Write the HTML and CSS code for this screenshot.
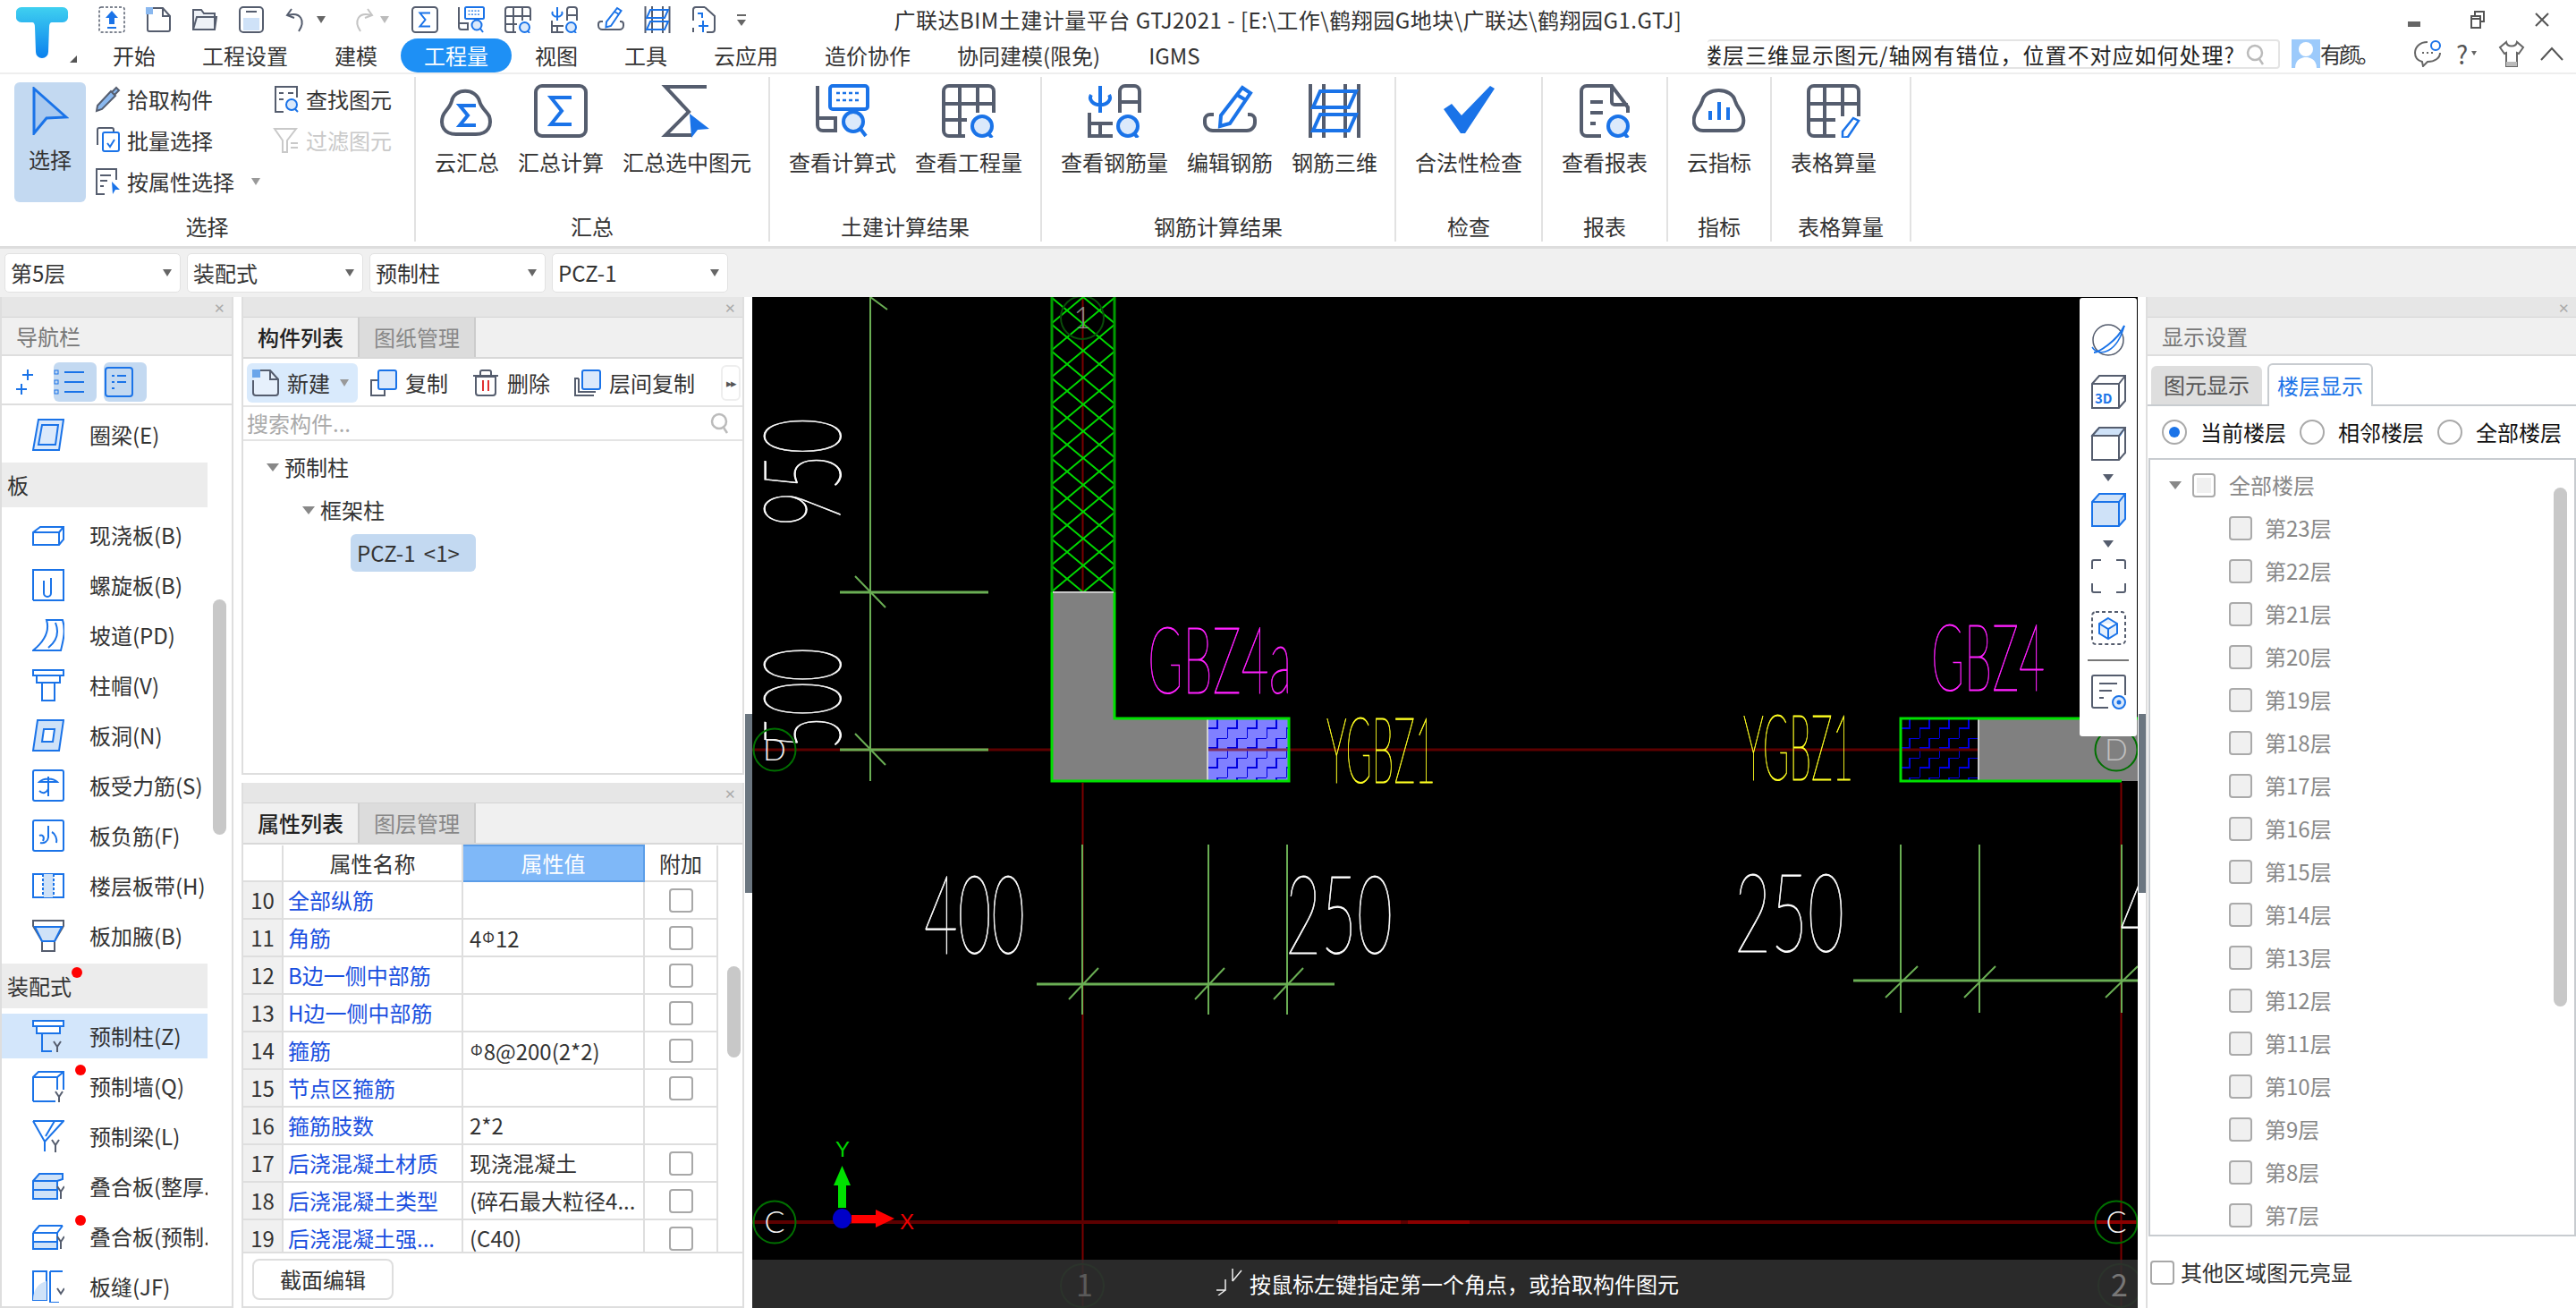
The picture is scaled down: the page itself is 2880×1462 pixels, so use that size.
FILE: index.html
```html
<!DOCTYPE html>
<html lang="zh-CN">
<head>
    <meta charset="UTF-8">
    <title>广联达BIM土建计量平台 GTJ2021</title>
    <link rel="stylesheet" href="styles.css">
</head>
<body>

<!-- shared icons -->
<svg class="defs" width="0" height="0">
    <symbol id="i-sumbox" viewBox="0 0 60 60">
        <rect x="2" y="2" width="56" height="56" rx="7" class="g"/>
        <path d="M42 15H19l12 15-12 15h23" class="b"/>
    </symbol>
    <symbol id="i-calc" viewBox="0 0 60 60">
        <path d="M2 2V46a6 6 0 0 0 6 6h14V38H2" class="g"/>
        <rect x="16" y="2" width="42" height="26" rx="3" class="b"/>
        <path d="M23 10h4M30 10h4M37 10h4M44 10h4M23 18h4M30 18h4M37 18h4M44 18h4" class="b thin"/>
        <circle cx="42" cy="42" r="11" class="bf"/>
        <path d="M50 50l6 8" class="b"/>
    </symbol>
    <symbol id="i-grid" viewBox="0 0 60 60">
        <path d="M26 58H8a6 6 0 0 1-6-6V8a6 6 0 0 1 6-6h44a6 6 0 0 1 6 6v24M2 22H58M20 2V58M40 2V32M2 40H28" class="g"/>
        <circle cx="45" cy="47" r="11" class="bf"/>
        <path d="M52 55l4 5" class="b"/>
    </symbol>
    <symbol id="i-rebar" viewBox="0 0 60 60">
        <path d="M36 32V8a6 6 0 0 1 6-6h10a6 6 0 0 1 6 6v24M36 20H58M2 32V58H28M2 44H28M14 44V58" class="g"/>
        <path d="M14 2V32M4 12a11 8 0 1 0 20 0" class="b"/>
        <circle cx="45" cy="47" r="11" class="bf"/>
        <path d="M52 55l4 5" class="b"/>
    </symbol>
    <symbol id="i-pen" viewBox="0 0 60 60">
        <path d="M12 34H8a6 6 0 0 0-6 6v3a9 9 0 0 0 9 9h38a9 9 0 0 0 9-9v-3a6 6 0 0 0-6-6h-2" class="g"/>
        <path d="M44 4l9 6-23 34-11 3 1-12zM38 12l10 6" class="b"/>
    </symbol>
    <symbol id="i-3d" viewBox="0 0 60 60">
        <path d="M3 0V60M18 0V60M42 0V60M57 0V60" class="g"/>
        <path d="M14 8H54L46 26H6zM14 34H54L46 52H6z" class="b"/>
    </symbol>
    <symbol id="i-cloud" viewBox="0 0 64 56">
        <path d="M20 54C6 54 2 44 5 34c2-6 8-9 10-17C18 2 42 2 46 17c2 8 8 11 11 17 3 10-1 20-15 20z" class="g"/>
        <path d="M42 22H24l9 11-9 11h18" class="b"/>
    </symbol>
    <symbol id="i-report" viewBox="0 0 60 60">
        <path d="M26 58H10a6 6 0 0 1-6-6V8a6 6 0 0 1 6-6h28l18 24v6M38 2V20a3 3 0 0 0 3 3h15M14 20H28M14 32H28M14 44H20" class="g"/>
        <circle cx="45" cy="47" r="11" class="bf"/>
        <path d="M52 55l4 5" class="b"/>
    </symbol>
    <symbol id="i-stat" viewBox="0 0 60 60">
        <path d="M17 52H12C2 52 0 42 3 34c2-6 6-8 8-15C15 3 44 3 48 19c2 7 6 9 8 15 3 8 1 18-9 18H17z" class="g"/>
        <path d="M20 40V30M30 40V20M40 40V26" class="b"/>
    </symbol>
    <symbol id="i-gridpen" viewBox="0 0 60 60">
        <path d="M32 58H8a6 6 0 0 1-6-6V8a6 6 0 0 1 6-6h44a6 6 0 0 1 6 6v28M2 22H58M20 2V58M40 2V36M2 40H32" class="g"/>
        <path d="M52 38l6 3-12 18-6 1 0-7z" class="b thin"/>
    </symbol>
    <symbol id="i-cube" viewBox="0 0 41 40">
        <path d="M2 11l8-9h29V30l-7 8H2zM2 11H32V38M32 11l7-9" class="g thin"/>
    </symbol>
</svg>

<header class="top">
    <div class="logo">
        <svg width="60" height="58" viewBox="0 0 60 58">
            <defs>
                <linearGradient id="logoFill" x1="0" y1="0" x2="0" y2="1">
                    <stop offset="0" stop-color="#3fd0f0"/>
                    <stop offset="1" stop-color="#0a80ee"/>
                </linearGradient>
            </defs>
            <path d="M6 1H52a6 6 0 0 1 6 7v3a6 6 0 0 1-6 7H40c-2 0-3 2-3 5l-1 28a7 7 0 0 1-14 0L21 23c0-3-1-5-3-5H6a6 6 0 0 1-6-7V8a6 6 0 0 1 6-7z" fill="url(#logoFill)"/>
        </svg>
        <span class="logo-mark"></span>
    </div>
    <div class="top-main">
        <div class="top-row">
            <div class="qa">
                <svg class="qa-i" viewBox="0 0 30 30"><rect x="1" y="1" width="28" height="28" rx="2" fill="none" stroke="#555d6e" stroke-width="1.5" stroke-dasharray="3 2"/><path d="M15 5l7 8h-4v7h-6v-7H8z" fill="#1a73e8"/><path d="M10 24h10" stroke="#1a73e8" stroke-width="2"/></svg>
                <svg class="qa-i" viewBox="0 0 30 30"><path d="M8 2H20l8 9V26a2 2 0 0 1-2 2H5a2 2 0 0 1-2-2V8M20 2v9h8" fill="none" stroke="#555d6e" stroke-width="2"/><path d="M1 1h8v8H1z" fill="#8ab8ef"/></svg>
                <svg class="qa-i" viewBox="0 0 30 30"><path d="M2 26V4h9l3 4h12v18zM2 26l4-14h22l-2 14" fill="#eef2f7" stroke="#555d6e" stroke-width="2"/></svg>
                <svg class="qa-i" viewBox="0 0 30 30"><rect x="2" y="1" width="26" height="28" rx="4" fill="#fff" stroke="#555d6e" stroke-width="2"/><rect x="6" y="13" width="18" height="14" fill="#cfe2f8"/><path d="M9 6h12" stroke="#555d6e" stroke-width="2"/></svg>
                <span class="qa-wide"><svg class="qa-i" viewBox="0 0 30 30"><path d="M8 3L3 10l8 3M4 10c14-4 20 6 12 18" fill="none" stroke="#555d6e" stroke-width="2"/></svg><i class="caret"></i></span>
                <span class="qa-wide off"><svg class="qa-i" viewBox="0 0 30 30"><path d="M22 3l5 7-8 3M26 10C12 6 6 16 14 28" fill="none" stroke="#c4c4c4" stroke-width="2"/></svg><i class="caret"></i></span>
                <svg class="qa-i"><use href="#i-sumbox"/></svg>
                <svg class="qa-i"><use href="#i-calc"/></svg>
                <svg class="qa-i"><use href="#i-grid"/></svg>
                <svg class="qa-i"><use href="#i-rebar"/></svg>
                <svg class="qa-i"><use href="#i-pen"/></svg>
                <svg class="qa-i"><use href="#i-3d"/></svg>
                <svg class="qa-i" viewBox="0 0 30 30"><path d="M16 1H6a3 3 0 0 0-3 3V16M16 1l11 10V26a3 3 0 0 1-3 3h-6M3 24v5" fill="none" stroke="#555d6e" stroke-width="2"/><path d="M9 22H20M14 16V29M8 8h5v5" fill="none" stroke="#1a73e8" stroke-width="2"/></svg>
                <span class="qa-more"></span>
            </div>
            <div class="title">广联达BIM土建计量平台 GTJ2021 - [E:\工作\鹤翔园G地块\广联达\鹤翔园G1.GTJ]</div>
            <div class="win">
                <span class="win-min"></span>
                <svg width="16" height="20" viewBox="0 0 16 20"><path d="M5 5V1h10v11h-4M1 6h10v13H1zM1 9h10" fill="none" stroke="#555" stroke-width="2"/></svg>
                <svg width="16" height="16" viewBox="0 0 16 16"><path d="M1 1l14 14M15 1L1 15" stroke="#555" stroke-width="2"/></svg>
            </div>
        </div>
        <div class="top-row menu-row">
            <nav class="menu">
                <a>开始</a><a>工程设置</a><a>建模</a><a class="on">工程量</a><a>视图</a><a>工具</a><a>云应用</a><a>造价协作</a><a>协同建模(限免)</a><a class="latin">IGMS</a>
            </nav>
            <div class="help-search">
                <span class="help-text">楼层三维显示图元/轴网有错位，位置不对应如何处理?</span>
                <svg width="22" height="24" viewBox="0 0 22 24"><circle cx="10" cy="10" r="8" fill="none" stroke="#bbb" stroke-width="2.5"/><path d="M15 17l4 6" stroke="#bbb" stroke-width="2.5"/></svg>
            </div>
            <div class="user">
                <svg width="32" height="32" viewBox="0 0 32 32"><rect width="32" height="32" fill="#9ccafb"/><circle cx="16" cy="11" r="8" fill="#fff"/><path d="M4 32c0-10 8-12 12-12s12 2 12 12z" fill="#fff"/></svg>
                <span>有颜。</span>
            </div>
            <div class="top-tools">
                <svg width="30" height="30" viewBox="0 0 30 30"><path d="M15 2C6 2 1 8 1 14c0 6 4 9 8 10l1 5 5-5c8 0 14-4 14-10" fill="none" stroke="#666" stroke-width="2"/><circle cx="24" cy="6" r="5" fill="#fff" stroke="#1a73e8" stroke-width="2"/><path d="M9 14h2M14 14h2M19 14h2" stroke="#666" stroke-width="2"/></svg>
                <span class="help-q">?<i class="caret"></i></span>
                <svg width="30" height="30" viewBox="0 0 30 30"><path d="M9 2l-7 6 5 7 2-1v15h12V14l2 1 5-7-7-6c-1 6-11 6-12 0z" fill="none" stroke="#666" stroke-width="2"/><path d="M9 24h12v5H9z" fill="#bbb"/></svg>
                <svg width="26" height="16" viewBox="0 0 26 16"><path d="M1 15L13 2l12 13" fill="none" stroke="#555" stroke-width="2"/></svg>
            </div>
        </div>
    </div>
</header>

<section class="ribbon">
    <div class="rb-group">
        <div class="rb-items select-items">
            <div class="select-big">
                <svg width="42" height="54" viewBox="0 0 42 54"><path d="M3 2L39 34 17 35 3 52z" fill="#a9c9ef" stroke="#1a73e8" stroke-width="3"/></svg>
                <span>选择</span>
            </div>
            <div class="small-col">
                <div class="small"><svg class="s-i" viewBox="0 0 30 30"><path d="M25 2l3 3-5 5-3-3zM19 6l5 5-15 15-6 2 1-6z" fill="#8ab8ef" stroke="#555d6e" stroke-width="2"/></svg>拾取构件</div>
                <div class="small"><svg class="s-i" viewBox="0 0 30 30"><path d="M4 20V3a2 2 0 0 1 2-2h14a2 2 0 0 1 2 2v2" fill="none" stroke="#555d6e" stroke-width="2"/><rect x="10" y="6" width="18" height="21" rx="2" fill="#fff" stroke="#1a73e8" stroke-width="2"/><path d="M15 18l3 4 5-8" fill="none" stroke="#1a73e8" stroke-width="2"/></svg>批量选择</div>
                <div class="small"><svg class="s-i" viewBox="0 0 30 30"><path d="M12 29H3V1h22v12M7 8h12M7 14h8M7 20h4" fill="none" stroke="#555d6e" stroke-width="2"/><path d="M20 15l9 9-5 0-3 5z" fill="#1a73e8"/></svg>按属性选择<i class="caret sm"></i></div>
            </div>
            <div class="small-col">
                <div class="small"><svg class="s-i" viewBox="0 0 30 30"><path d="M12 29H3V1h24v12M7 8h5M7 15h5M17 8h6" fill="none" stroke="#555d6e" stroke-width="2"/><circle cx="21" cy="21" r="6" fill="#dbe9fb" stroke="#1a73e8" stroke-width="2"/><path d="M25 26l3 3" stroke="#1a73e8" stroke-width="2"/></svg>查找图元</div>
                <div class="small off"><svg class="s-i" viewBox="0 0 30 30"><path d="M2 2H26L16 15V28H11V15z" fill="none" stroke="#c9c9c9" stroke-width="2"/><path d="M20 18h8M20 23h8" stroke="#c9c9c9" stroke-width="2"/></svg>过滤图元</div>
            </div>
        </div>
        <div class="rb-label">选择</div>
    </div>
    <div class="rb-group">
        <div class="rb-items">
            <div class="big"><svg class="b-i wide"><use href="#i-cloud"/></svg><span>云汇总</span></div>
            <div class="big"><svg class="b-i"><use href="#i-sumbox"/></svg><span>汇总计算</span></div>
            <div class="big">
                <svg class="b-i" viewBox="0 0 60 60"><path d="M52 3H6L32 31 6 57H36" class="g"/><path d="M33 33L55 50 42 51 35 60z" fill="#1a73e8"/></svg>
                <span>汇总选中图元</span>
            </div>
        </div>
        <div class="rb-label">汇总</div>
    </div>
    <div class="rb-group">
        <div class="rb-items">
            <div class="big"><svg class="b-i"><use href="#i-calc"/></svg><span>查看计算式</span></div>
            <div class="big"><svg class="b-i"><use href="#i-grid"/></svg><span>查看工程量</span></div>
        </div>
        <div class="rb-label">土建计算结果</div>
    </div>
    <div class="rb-group">
        <div class="rb-items">
            <div class="big"><svg class="b-i"><use href="#i-rebar"/></svg><span>查看钢筋量</span></div>
            <div class="big"><svg class="b-i"><use href="#i-pen"/></svg><span>编辑钢筋</span></div>
            <div class="big"><svg class="b-i"><use href="#i-3d"/></svg><span>钢筋三维</span></div>
        </div>
        <div class="rb-label">钢筋计算结果</div>
    </div>
    <div class="rb-group">
        <div class="rb-items">
            <div class="big">
                <svg class="b-i" viewBox="0 0 60 60"><path d="M2 28l9-6 11 13L54 2l5 3-33 50h-5z" fill="#1a73e8"/></svg>
                <span>合法性检查</span>
            </div>
        </div>
        <div class="rb-label">检查</div>
    </div>
    <div class="rb-group">
        <div class="rb-items">
            <div class="big"><svg class="b-i"><use href="#i-report"/></svg><span>查看报表</span></div>
        </div>
        <div class="rb-label">报表</div>
    </div>
    <div class="rb-group">
        <div class="rb-items">
            <div class="big"><svg class="b-i"><use href="#i-stat"/></svg><span>云指标</span></div>
        </div>
        <div class="rb-label">指标</div>
    </div>
    <div class="rb-group">
        <div class="rb-items">
            <div class="big"><svg class="b-i"><use href="#i-gridpen"/></svg><span>表格算量</span></div>
        </div>
        <div class="rb-label">表格算量</div>
    </div>
</section>

<section class="combos">
    <div class="combo">第5层<i class="caret"></i></div>
    <div class="combo">装配式<i class="caret"></i></div>
    <div class="combo">预制柱<i class="caret"></i></div>
    <div class="combo">PCZ-1<i class="caret"></i></div>
</section>

<main class="work">
    <!-- left nav -->
    <aside class="pane nav">
        <div class="pane-head">✕</div>
        <div class="pane-title">导航栏</div>
        <div class="nav-tools">
            <svg width="20" height="32" viewBox="0 0 20 32"><path d="M13 2v12M7 8h12M6 18v12M0 24h12" stroke="#1a73e8" stroke-width="2"/></svg>
            <span class="nav-btn"><svg width="34" height="30" viewBox="0 0 34 30"><path d="M12 4H34M12 15H34M12 26H34" stroke="#1a73e8" stroke-width="2"/><rect x="1" y="2" width="4" height="4" fill="none" stroke="#1a73e8"/><rect x="1" y="13" width="4" height="4" fill="none" stroke="#1a73e8"/><rect x="1" y="24" width="4" height="4" fill="none" stroke="#1a73e8"/></svg></span>
            <span class="nav-btn"><svg width="32" height="34" viewBox="0 0 32 34"><rect x="1" y="1" width="30" height="32" rx="3" fill="none" stroke="#1a73e8" stroke-width="2"/><path d="M8 10h3M14 10h10M8 17h3M14 17h10M8 24h3" stroke="#1a73e8" stroke-width="2"/></svg></span>
        </div>
        <div class="nav-list">
            <div class="nav-item"><svg class="n-i" viewBox="0 0 36 36"><path d="M7 1H35L30 35H1zM11 7H29L26 29H7z" fill="#dbe9fb" stroke="#1a73e8" stroke-width="2"/></svg>圈梁(E)</div>
            <div class="nav-group">板</div>
            <div class="nav-item"><svg class="n-i" viewBox="0 0 36 36"><path d="M1 15L9 9H35V23L30 29H1zM1 15H30V29M30 15l5-6" fill="#fff" stroke="#1a73e8" stroke-width="2"/></svg>现浇板(B)</div>
            <div class="nav-item"><svg class="n-i" viewBox="0 0 36 36"><path d="M1 35V1H35V35H1M13 13v14a4 4 0 0 0 8 0V10" fill="none" stroke="#1a73e8" stroke-width="2"/></svg>螺旋板(B)</div>
            <div class="nav-item"><svg class="n-i" viewBox="0 0 36 36"><path d="M16 1H34C38 14 34 26 32 35H1C12 26 20 14 16 1zM26 4c4 10 2 20-8 28" fill="#fff" stroke="#1a73e8" stroke-width="2"/></svg>坡道(PD)</div>
            <div class="nav-item"><svg class="n-i" viewBox="0 0 36 36"><path d="M1 1H35V7H1zM5 7H31V15H5zM11 15H25V35H11z" fill="#fff" stroke="#1a73e8" stroke-width="2"/></svg>柱帽(V)</div>
            <div class="nav-item"><svg class="n-i" viewBox="0 0 36 36"><path d="M6 1H35L30 35H1z" fill="#cfe2f8" stroke="#1a73e8" stroke-width="2"/><path d="M13 11H25L23 25H11z" fill="#fff" stroke="#1a73e8" stroke-width="2"/></svg>板洞(N)</div>
            <div class="nav-item"><svg class="n-i" viewBox="0 0 36 36"><rect x="1" y="1" width="34" height="34" rx="2" fill="none" stroke="#1a73e8" stroke-width="2"/><path d="M8 14a12 8 0 0 1 20 0H8zM18 8v22M8 24c4 4 8 2 10-2" fill="none" stroke="#1a73e8" stroke-width="2"/></svg>板受力筋(S)</div>
            <div class="nav-item"><svg class="n-i" viewBox="0 0 36 36"><rect x="1" y="1" width="34" height="34" rx="2" fill="none" stroke="#1a73e8" stroke-width="2"/><path d="M18 7V20a7 7 0 0 1-9 6M8 18c4-2 6 2 4 6M22 14c4 2 6 8 5 12" fill="none" stroke="#1a73e8" stroke-width="2"/></svg>板负筋(F)</div>
            <div class="nav-item"><svg class="n-i" viewBox="0 0 36 36"><rect x="1" y="5" width="34" height="26" fill="none" stroke="#1a73e8" stroke-width="2"/><rect x="12" y="5" width="12" height="26" fill="#cfe2f8"/><path d="M12 5v26M24 5v26" stroke="#1a73e8" stroke-width="2" stroke-dasharray="3 2"/></svg>楼层板带(H)</div>
            <div class="nav-item"><svg class="n-i" viewBox="0 0 36 36"><path d="M1 1H35V7L25 24V35H11V24L1 7z" fill="#fff" stroke="#555d6e" stroke-width="2"/><path d="M3 8H33L25 24H11z" fill="#cfe2f8" stroke="#1a73e8" stroke-width="2"/></svg>板加腋(B)</div>
            <div class="nav-group">装配式<i class="dot"></i></div>
            <div class="nav-item active"><svg class="n-i" viewBox="0 0 36 36"><path d="M1 1H35V7H1zM5 7H31V15H5z" fill="#fff" stroke="#1a73e8" stroke-width="2"/><path d="M11 15V35H22" fill="none" stroke="#1a73e8" stroke-width="2"/><path d="M24 24l4 6 4-6M28 30v6" fill="none" stroke="#555d6e" stroke-width="2"/></svg>预制柱(Z)</div>
            <div class="nav-item"><svg class="n-i" viewBox="0 0 36 36"><path d="M1 35V8L7 2H35V22M1 8H28V22M28 8l7-6M1 35H26" fill="none" stroke="#1a73e8" stroke-width="2"/><path d="M26 24l4 6 4-6M30 30v6" fill="none" stroke="#555d6e" stroke-width="2"/></svg>预制墙(Q)<i class="dot"></i></div>
            <div class="nav-item"><svg class="n-i" viewBox="0 0 36 36"><path d="M1 1H35L14 24V35M1 1L14 24M25 1L15 18" fill="none" stroke="#1a73e8" stroke-width="2"/><path d="M22 22l4 6 4-6M26 28v8" fill="none" stroke="#555d6e" stroke-width="2"/></svg>预制梁(L)</div>
            <div class="nav-item"><svg class="n-i" viewBox="0 0 36 36"><path d="M1 12L8 4H34V10L28 12H1zM1 12V32H28V12" fill="#cfe2f8" stroke="#1a73e8" stroke-width="2"/><path d="M1 22H28" stroke="#1a73e8" stroke-width="2"/><path d="M28 18l4 6 4-6M32 24v8" fill="none" stroke="#555d6e" stroke-width="2"/></svg>叠合板(整厚...</div>
            <div class="nav-item"><svg class="n-i" viewBox="0 0 36 36"><path d="M1 14L8 6H34M1 14H28M1 14V32H28V14M28 14l6-8" fill="none" stroke="#1a73e8" stroke-width="2"/><path d="M1 24H28V32H1z" fill="#cfe2f8" stroke="#1a73e8" stroke-width="2"/><path d="M28 18l4 6 4-6M32 24v8" fill="none" stroke="#555d6e" stroke-width="2"/></svg>叠合板(预制...<i class="dot"></i></div>
            <div class="nav-item"><svg class="n-i" viewBox="0 0 36 36"><path d="M1 1H16V33H1zM20 1H34M20 1V36H30" fill="none" stroke="#1a73e8" stroke-width="2"/><path d="M1 33C1 20 8 14 16 12V33z" fill="#cfe2f8"/><path d="M28 20l4 6 4-6" fill="none" stroke="#555d6e" stroke-width="2"/></svg>板缝(JF)</div>
            <span class="scroll nav-scroll"></span>
        </div>
    </aside>

    <!-- member list and properties -->
    <div class="mid">
        <div class="pane mid-top">
            <div class="pane-head">✕</div>
            <div class="tabs">
                <span class="tab on">构件列表</span><span class="tab">图纸管理</span>
            </div>
            <div class="list-tools">
                <span class="tool new">
                    <svg class="t-i" viewBox="0 0 30 30"><path d="M8 1H20L29 11V26a3 3 0 0 1-3 3H4a3 3 0 0 1-3-3V12" fill="#e6f0fc" stroke="#555d6e" stroke-width="2"/><path d="M20 1V11H29" fill="none" stroke="#555d6e" stroke-width="2"/><path d="M0 0h9v9H0z" fill="#6aa5ea"/></svg>新建<i class="caret sm"></i>
                </span>
                <span class="tool"><svg class="t-i" viewBox="0 0 30 30"><path d="M8 12H1V29H16V22" fill="none" stroke="#555d6e" stroke-width="2"/><rect x="9" y="1" width="20" height="21" rx="2" fill="#dbe9fb" stroke="#1a73e8" stroke-width="2"/></svg>复制</span>
                <span class="tool"><svg class="t-i" viewBox="0 0 30 30"><path d="M4 8H26V26a3 3 0 0 1-3 3H7a3 3 0 0 1-3-3zM1 7H29M9 7V3a2 2 0 0 1 2-2h8a2 2 0 0 1 2 2V7" fill="none" stroke="#555d6e" stroke-width="2"/><path d="M12 12V24M18 12V24" stroke="#e03030" stroke-width="2"/></svg>删除</span>
                <span class="tool"><svg class="t-i" viewBox="0 0 30 30"><path d="M5 10H1V29H22M5 10V25H24" fill="none" stroke="#555d6e" stroke-width="2"/><rect x="9" y="1" width="20" height="21" rx="2" fill="#dbe9fb" stroke="#1a73e8" stroke-width="2"/></svg>层间复制</span>
                <span class="tool-more">▸▸</span>
            </div>
            <div class="list-search">
                <span>搜索构件...</span>
                <svg width="22" height="26" viewBox="0 0 22 26"><circle cx="10" cy="11" r="8" fill="none" stroke="#bbb" stroke-width="2.5"/><path d="M15 18l4 6" stroke="#bbb" stroke-width="2.5"/></svg>
            </div>
            <div class="tree">
                <div class="tree-row lv1"><i class="caret tri"></i>预制柱</div>
                <div class="tree-row lv2"><i class="caret tri"></i>框架柱</div>
                <div class="tree-row lv3"><span class="picked">PCZ-1 &lt;1&gt;</span></div>
            </div>
        </div>
        <div class="pane mid-bottom">
            <div class="pane-head">✕</div>
            <div class="tabs">
                <span class="tab on">属性列表</span><span class="tab">图层管理</span>
            </div>
            <div class="props">
                <table class="prop-table">
                    <colgroup><col class="c-no"><col class="c-name"><col class="c-val"><col class="c-add"></colgroup>
                    <thead>
                        <tr><th></th><th>属性名称</th><th class="hi">属性值</th><th>附加</th></tr>
                    </thead>
                    <tbody>
                        <tr><td class="no">10</td><td class="name">全部纵筋</td><td class="val"></td><td class="add"><i class="box"></i></td></tr>
                        <tr><td class="no">11</td><td class="name">角筋</td><td class="val">4<span class="bar">Φ</span>12</td><td class="add"><i class="box"></i></td></tr>
                        <tr><td class="no">12</td><td class="name">B边一侧中部筋</td><td class="val"></td><td class="add"><i class="box"></i></td></tr>
                        <tr><td class="no">13</td><td class="name">H边一侧中部筋</td><td class="val"></td><td class="add"><i class="box"></i></td></tr>
                        <tr><td class="no">14</td><td class="name">箍筋</td><td class="val"><span class="bar">Φ</span>8@200(2*2)</td><td class="add"><i class="box"></i></td></tr>
                        <tr><td class="no">15</td><td class="name">节点区箍筋</td><td class="val"></td><td class="add"><i class="box"></i></td></tr>
                        <tr><td class="no">16</td><td class="name">箍筋肢数</td><td class="val">2*2</td><td class="add"></td></tr>
                        <tr><td class="no">17</td><td class="name">后浇混凝土材质</td><td class="val">现浇混凝土</td><td class="add"><i class="box"></i></td></tr>
                        <tr><td class="no">18</td><td class="name">后浇混凝土类型</td><td class="val">(碎石最大粒径4...</td><td class="add"><i class="box"></i></td></tr>
                        <tr><td class="no">19</td><td class="name">后浇混凝土强...</td><td class="val">(C40)</td><td class="add"><i class="box"></i></td></tr>
                    </tbody>
                </table>
                <span class="scroll prop-scroll"></span>
            </div>
            <div class="prop-foot"><button class="section-btn" type="button">截面编辑</button></div>
        </div>
    </div>

    <div class="handle"><span></span></div>

    <!-- drawing -->
    <div class="canvas">
        <svg class="cad" viewBox="841 332 1549 1130" width="1549" height="1130">
            <defs>
                <pattern id="hatchGreen" x="1175" y="332" width="36" height="30" patternUnits="userSpaceOnUse">
                    <path d="M0 0L36 30M36 0L0 30" stroke="#00d800" stroke-width="2"/>
                </pattern>
                <pattern id="hatchBlue" x="1350" y="803" width="22" height="22" patternUnits="userSpaceOnUse">
                    <path d="M0 22V11H11V0H22" fill="none" stroke="#0000e0" stroke-width="2"/>
                </pattern>
                <pattern id="hatchBlue2" x="2124" y="803" width="22" height="22" patternUnits="userSpaceOnUse">
                    <path d="M0 22V11H11V0H22" fill="none" stroke="#0000e0" stroke-width="2"/>
                </pattern>
            </defs>

            <!-- axis lines -->
            <path d="M1210.5 332V662M1210.5 875V1462M2371.5 875V1462" stroke="#7a0000" stroke-width="2"/>
            <path d="M841 838H1175M1350 838H2124" stroke="#5c0000" stroke-width="3"/>
            <path d="M841 1366H2390" stroke="#5c0000" stroke-width="4"/>
            <path d="M1496 1366H1566M1574 1366H1643M2345 1366H2390" stroke="#8b0000" stroke-width="4"/>

            <!-- walls -->
            <rect x="1175" y="332" width="72" height="330" fill="url(#hatchGreen)"/>
            <path d="M1176 332V662M1246 332V662" stroke="#009a00" stroke-width="3"/>
            <path d="M1175 662H1246V803H1350V873H1175z" fill="#808080"/>
            <rect x="1350" y="803" width="91" height="70" fill="#8080ff"/>
            <rect x="1350" y="803" width="91" height="70" fill="url(#hatchBlue)"/>
            <path d="M1350 838H1441" stroke="#803060" stroke-width="3"/>
            <path d="M1350 803V873" stroke="#d0d0d0" stroke-width="2"/>
            <path d="M1176 662V873H1441V803H1246V662" fill="none" stroke="#00e000" stroke-width="3"/>
            <path d="M1177 662H1245" stroke="#c8c8c8" stroke-width="2"/>

            <rect x="2124" y="803" width="88" height="70" fill="url(#hatchBlue2)"/>
            <path d="M2124 838H2212" stroke="#5c0000" stroke-width="3"/>
            <rect x="2212" y="803" width="178" height="70" fill="#808080"/>
            <path d="M2212 803V873" stroke="#c8c8c8" stroke-width="2"/>
            <path d="M2390 803H2125V873H2372" fill="none" stroke="#00e000" stroke-width="3"/>

            <!-- dimension lines -->
            <g class="dim">
                <path d="M973 332V873M973 332L992 346M956 644L990 679M956 820L990 855"/>
                <path d="M1210 944V1134M1351 944V1134M1439 944V1134M2125 944V1132M2213 944V1132M2372 944V1132"/>
                <path d="M1228 1082L1195 1117M1369 1082L1336 1117M1457 1082L1424 1117M2144 1080L2108 1115M2231 1080L2196 1115M2390 1080L2354 1115"/>
                <path class="wide" d="M939 662H1105M939 838H1105M1159 1100H1492M2072 1096H2390"/>
            </g>

            <!-- labels -->
            <text class="cad-text white" transform="translate(940 589) rotate(-90)" font-size="120" textLength="122" lengthAdjust="spacingAndGlyphs">950</text>
            <text class="cad-text white" transform="translate(940 838) rotate(-90)" font-size="120" textLength="114" lengthAdjust="spacingAndGlyphs">500</text>
            <text class="cad-text white" x="1033" y="1066" font-size="122" textLength="113" lengthAdjust="spacingAndGlyphs">400</text>
            <text class="cad-text white" x="1437" y="1066" font-size="122" textLength="120" lengthAdjust="spacingAndGlyphs">250</text>
            <text class="cad-text white" x="1939" y="1064" font-size="122" textLength="123" lengthAdjust="spacingAndGlyphs">250</text>
            <text class="cad-text white" x="2370" y="1064" font-size="122" textLength="113" lengthAdjust="spacingAndGlyphs">400</text>
            <text class="cad-text pink" x="1283" y="775" font-size="104" textLength="161" lengthAdjust="spacingAndGlyphs">GBZ4a</text>
            <text class="cad-text pink" x="2159" y="772" font-size="104" textLength="127" lengthAdjust="spacingAndGlyphs">GBZ4</text>
            <text class="cad-text yellow" x="1483" y="875" font-size="103" textLength="122" lengthAdjust="spacingAndGlyphs">YGBZ1</text>
            <text class="cad-text yellow" x="1949" y="872" font-size="103" textLength="123" lengthAdjust="spacingAndGlyphs">YGBZ1</text>

            <!-- axis bubbles -->
            <g class="bubble">
                <circle cx="866" cy="838" r="23.5"/>
                <circle cx="2366" cy="838" r="23.5"/>
                <circle cx="866" cy="1366" r="23.5"/>
                <circle cx="2366" cy="1366" r="23.5"/>
                <circle cx="1210" cy="355" r="24" class="dim-ring"/>
                <circle cx="1210" cy="1437" r="24" class="dim-ring"/>
                <circle cx="2370" cy="1437" r="24" class="dim-ring"/>
            </g>
            <text class="axis-mark" x="866" y="850">D</text>
            <text class="axis-mark grey" x="2366" y="850">D</text>
            <text class="axis-mark" x="866" y="1378">C</text>
            <text class="axis-mark" x="2366" y="1378">C</text>
            <text class="axis-mark dimmed" x="1210" y="367">1</text>

            <!-- origin -->
            <path d="M941.500 1350V1325" stroke="#00e000" stroke-width="9"/>
            <path d="M941.500 1303L951 1325H932z" fill="#00e000"/>
            <path d="M952 1362.500H979" stroke="#ff0000" stroke-width="9"/>
            <path d="M1000 1362L979 1352V1372z" fill="#ff0000"/>
            <ellipse cx="941.500" cy="1362" rx="10.500" ry="11" fill="#0000c8"/>
            <text class="xy green" x="942" y="1293">Y</text>
            <text class="xy red" x="1014" y="1374">X</text>
        </svg>

        <div class="view-tools">
            <svg class="v-i" viewBox="0 0 41 40"><circle cx="20" cy="20" r="17" fill="none" stroke="#555d6e" stroke-width="1.500"/><path d="M4 34C8 34 30 22 38 4" fill="none" stroke="#1a73e8" stroke-width="2"/><path d="M2 28C10 40 30 34 38 4" fill="none" stroke="#1a73e8" stroke-width="1.500"/></svg>
            <svg class="v-i" viewBox="0 0 41 40"><use href="#i-cube"/><text class="v-3d" x="5" y="33">3D</text></svg>
            <svg class="v-i" viewBox="0 0 41 40"><path d="M2 11H33l6-9H10z" fill="#cfe2f8" stroke="#1a73e8" stroke-width="1.500"/><use href="#i-cube"/></svg>
            <i class="caret v-caret"></i>
            <svg class="v-i" viewBox="0 0 41 40"><path d="M2 11l8-9h29V30l-7 8H2z" fill="#cfe2f8" stroke="#1a73e8" stroke-width="2"/><path d="M2 11H32V38M32 11l7-9" fill="none" stroke="#1a73e8" stroke-width="2"/></svg>
            <i class="caret v-caret"></i>
            <svg class="v-i" viewBox="0 0 41 40"><path d="M2 12V4a2 2 0 0 1 2-2h8M29 2h8a2 2 0 0 1 2 2v8M39 28v8a2 2 0 0 1-2 2h-8M12 38H4a2 2 0 0 1-2-2v-8" fill="none" stroke="#555d6e" stroke-width="2"/></svg>
            <svg class="v-i" viewBox="0 0 41 40"><rect x="2" y="2" width="37" height="36" rx="4" fill="none" stroke="#555d6e" stroke-width="2" stroke-dasharray="4 3"/><path d="M20 9l10 6v11l-10 6-10-6V15zM10 15l10 6 10-6M20 21v11" fill="#e6f0fc" stroke="#1a73e8" stroke-width="2"/></svg>
            <span class="v-sep"></span>
            <svg class="v-i" viewBox="0 0 41 40"><path d="M20 38H4a2 2 0 0 1-2-2V4a2 2 0 0 1 2-2h33a2 2 0 0 1 2 2V24M10 11h20M10 19h14M10 27h5" fill="none" stroke="#555d6e" stroke-width="2"/><circle cx="32" cy="32" r="7" fill="#dbe9fb" stroke="#1a73e8" stroke-width="2"/><circle cx="32" cy="32" r="2.500" fill="#1a73e8"/></svg>
        </div>

        <div class="status-bar">
            <svg width="32" height="32" viewBox="0 0 32 32"><path d="M20 16V2M20 16L30 4M2 26H12V14M12 26L4 32" fill="none" stroke="#eee" stroke-width="1.500"/></svg>
            <span>按鼠标左键指定第一个角点，或拾取构件图元</span>
            <span class="status-1">1</span>
            <span class="status-2">2</span>
        </div>
    </div>

    <div class="handle"><span></span></div>

    <!-- display settings -->
    <aside class="pane show">
        <div class="pane-head">✕</div>
        <div class="pane-title">显示设置</div>
        <div class="show-tabs">
            <span class="show-tab">图元显示</span>
            <span class="show-tab on">楼层显示</span>
        </div>
        <div class="radios">
            <label class="radio"><i class="dot-radio on"></i>当前楼层</label>
            <label class="radio"><i class="dot-radio"></i>相邻楼层</label>
            <label class="radio"><i class="dot-radio"></i>全部楼层</label>
        </div>
        <div class="floors">
            <div class="floor top-floor"><i class="caret tri"></i><i class="fbox part"></i>全部楼层</div>
            <div class="floor"><i class="fbox"></i>第23层</div>
            <div class="floor"><i class="fbox"></i>第22层</div>
            <div class="floor"><i class="fbox"></i>第21层</div>
            <div class="floor"><i class="fbox"></i>第20层</div>
            <div class="floor"><i class="fbox"></i>第19层</div>
            <div class="floor"><i class="fbox"></i>第18层</div>
            <div class="floor"><i class="fbox"></i>第17层</div>
            <div class="floor"><i class="fbox"></i>第16层</div>
            <div class="floor"><i class="fbox"></i>第15层</div>
            <div class="floor"><i class="fbox"></i>第14层</div>
            <div class="floor"><i class="fbox"></i>第13层</div>
            <div class="floor"><i class="fbox"></i>第12层</div>
            <div class="floor"><i class="fbox"></i>第11层</div>
            <div class="floor"><i class="fbox"></i>第10层</div>
            <div class="floor"><i class="fbox"></i>第9层</div>
            <div class="floor"><i class="fbox"></i>第8层</div>
            <div class="floor"><i class="fbox"></i>第7层</div>
            <span class="scroll floor-scroll"></span>
        </div>
        <label class="other"><i class="box"></i>其他区域图元亮显</label>
    </aside>
</main>

</body>
</html>
```

FILE: styles.css
```css
/* Reset & base */
* {
    box-sizing: border-box;
    margin: 0;
    padding: 0;
}

body {
    width: 2880px;
    height: 1462px;
    overflow: hidden;
    background: #fff;
    color: #333;
    font-family: "Noto Sans CJK SC", "Liberation Sans", sans-serif;
    font-size: 24px;
    line-height: 32px;
    display: flex;
    flex-direction: column;
}

i {
    font-style: normal;
}

.defs {
    position: absolute;
}

/* icon strokes, used by the symbols */
.g {
    fill: none;
    stroke: #555d6e;
    stroke-width: 4;
}

.b {
    fill: none;
    stroke: #1a73e8;
    stroke-width: 4;
}

.b.thin {
    stroke-width: 2.500;
}

.g.thin {
    stroke-width: 2;
}

.bf {
    fill: #dbe9fb;
    stroke: #1a73e8;
    stroke-width: 4;
}

.caret {
    display: inline-block;
    width: 0;
    height: 0;
    border-left: 5px solid transparent;
    border-right: 5px solid transparent;
    border-top: 8px solid #666;
}

.caret.sm {
    margin-left: 12px;
    border-top-color: #999;
}

.caret.tri {
    border-left-width: 7px;
    border-right-width: 7px;
    border-top: 9px solid #888;
}

/* Title bar and menu */
.top {
    height: 81px;
    display: flex;
    flex-shrink: 0;
}

.logo {
    width: 100px;
    position: relative;
    padding: 7px 0 0 18px;
}

.logo-mark {
    position: absolute;
    left: 78px;
    top: 62px;
    border-left: 8px solid transparent;
    border-bottom: 8px solid #555;
}

.top-main {
    flex: 1;
    display: flex;
    flex-direction: column;
}

.top-row {
    height: 43px;
    display: grid;
    grid-template-columns: 1fr auto 1fr;
    align-items: center;
    margin-left: -100px;
    padding-left: 100px;
}

.qa {
    display: flex;
    align-items: center;
    padding-left: 10px;
    height: 43px;
}

.qa-i {
    width: 30px;
    height: 30px;
    margin-right: 22px;
    flex-shrink: 0;
}

.qa-wide {
    display: flex;
    align-items: center;
    width: 71px;
}

.qa-wide .qa-i {
    margin-right: 6px;
}

.qa-wide.off .caret {
    border-top-color: #bbb;
}

.qa-more {
    width: 10px;
    height: 12px;
    border-top: 2px solid #666;
    position: relative;
}

.qa-more::after {
    content: "";
    position: absolute;
    left: 0;
    top: 4px;
    border-left: 5px solid transparent;
    border-right: 5px solid transparent;
    border-top: 7px solid #666;
}

.title {
    font-size: 24px;
    color: #333;
    white-space: nowrap;
    letter-spacing: 0.5px;
    transform: translateX(-50px);
}

.win {
    display: flex;
    justify-content: flex-end;
    align-items: center;
    gap: 56px;
    padding-right: 30px;
}

.win-min {
    width: 14px;
    height: 6px;
    background: #666;
    margin-top: 10px;
}

.menu-row {
    display: flex;
    height: 38px;
    padding-left: 100px;
    align-items: stretch;
}

.menu {
    display: flex;
    align-items: stretch;
}

.menu a {
    padding: 0 26px;
    line-height: 38px;
    color: #333;
    white-space: nowrap;
}

.menu a.on {
    background: #1e90f5;
    color: #fff;
    border-radius: 19px;
}

.menu a.latin {
    padding-left: 28px;
}

.help-search {
    width: 640px;
    height: 33px;
    flex-shrink: 0;
    margin: 1px 0 0 auto;
    border: 2px solid #e4e4e4;
    border-left: 0;
    border-radius: 4px;
    display: flex;
    align-items: center;
    justify-content: space-between;
    padding-right: 14px;
    overflow: hidden;
    white-space: nowrap;
    color: #222;
}

.help-text {
    margin-left: -8px;
    letter-spacing: 1px;
}

.user {
    display: flex;
    align-items: center;
    flex-shrink: 0;
    margin: 0 0 5px 13px;
    width: 89px;
    white-space: nowrap;
}

.user svg {
    flex-shrink: 0;
}

.user span {
    letter-spacing: -3px;
}

.top-tools {
    display: flex;
    align-items: center;
    flex-shrink: 0;
    gap: 17px;
    margin: 0 14px 5px 48px;
}

.help-q {
    width: 30px;
    font-size: 28px;
    color: #555;
    display: flex;
    align-items: center;
    gap: 4px;
}

.help-q .caret {
    border-left-width: 3px;
    border-right-width: 3px;
    border-top-width: 5px;
}

/* Ribbon */
.ribbon {
    height: 197px;
    flex-shrink: 0;
    display: grid;
    grid-template-columns: 465px 396px 304px 396px 164px 140px 116px 156px;
    border-top: 2px solid #eee;
    border-bottom: 3px solid #ddd;
    padding-top: 3px;
}

.rb-group {
    height: 184px;
    border-right: 2px solid #e2e2e2;
}

.rb-items {
    height: 150px;
    display: flex;
    gap: 21px;
    padding-left: 21px;
    white-space: nowrap;
}

.rb-label {
    line-height: 34px;
    text-align: center;
}

.big {
    display: flex;
    flex-direction: column;
    align-items: center;
    padding-top: 8px;
}

.big span {
    margin-top: 11px;
}

.b-i {
    width: 60px;
    height: 60px;
}

.b-i.wide {
    width: 64px;
}

.select-items {
    padding-left: 16px;
    gap: 9px;
}

.select-big {
    width: 80px;
    height: 134px;
    margin-top: 6px;
    background: #c3d9f1;
    border-radius: 6px;
    display: flex;
    flex-direction: column;
    align-items: center;
    padding-top: 5px;
}

.select-big span {
    margin-top: 11px;
}

.small-col {
    padding-top: 2px;
    margin-right: 5px;
}

.small {
    height: 46px;
    display: flex;
    align-items: center;
    gap: 7px;
    white-space: nowrap;
}

.small.off {
    color: #c9c9c9;
}

.s-i {
    width: 30px;
    height: 30px;
}

/* Combo row */
.combos {
    height: 54px;
    flex-shrink: 0;
    background: #f0f0f0;
    display: flex;
    gap: 7px;
    padding: 5px;
}

.combo {
    width: 197px;
    height: 44px;
    background: #fff;
    border: 1px solid #e2e2e2;
    border-radius: 5px;
    padding-left: 6px;
    line-height: 42px;
    position: relative;
}

.combo .caret {
    position: absolute;
    right: 9px;
    top: 17px;
}

/* Working area */
.work {
    flex: 1;
    display: flex;
    background: #fff;
    min-height: 0;
}

.pane {
    display: flex;
    flex-direction: column;
    border: 2px solid #dedede;
    border-top: 0;
    background: #fff;
}

.pane-head {
    height: 23px;
    flex-shrink: 0;
    background: #e6e6e6;
    color: #aaa;
    font-size: 15px;
    line-height: 23px;
    text-align: right;
    padding-right: 7px;
    border-bottom: 1px solid #d4d4d4;
}

.pane-title {
    height: 43px;
    flex-shrink: 0;
    background: #f0f0f0;
    color: #777;
    line-height: 42px;
    padding-left: 16px;
    border-bottom: 2px solid #dedede;
}

.scroll {
    position: absolute;
    background: #c8c8c8;
    border-radius: 8px;
    width: 15px;
}

/* Navigation */
.nav {
    width: 261px;
    margin-left: 0;
}

.nav-tools {
    height: 55px;
    flex-shrink: 0;
    display: flex;
    align-items: center;
    gap: 8px;
    padding: 5px 0 0 16px;
    border-bottom: 2px solid #dedede;
}

.nav-tools svg:first-child {
    margin-right: 14px;
}

.nav-btn {
    width: 48px;
    height: 44px;
    background: #c3d9f1;
    border-radius: 6px;
    display: flex;
    align-items: center;
    justify-content: center;
}

.nav-list {
    flex: 1;
    overflow: hidden;
    position: relative;
    padding-top: 5px;
}

.nav-item {
    width: 230px;
    height: 56px;
    display: flex;
    align-items: center;
    padding-left: 34px;
    white-space: nowrap;
    overflow: hidden;
    position: relative;
}

.nav-item .dot {
    left: 82px;
    top: 4px;
}

.nav-item.active {
    background: #d3e6fb;
    background-clip: content-box;
    padding: 3px 0;
}

.nav-item.active .n-i {
    margin-left: 34px;
}

.n-i {
    width: 36px;
    height: 36px;
    margin-right: 28px;
    flex-shrink: 0;
}

.nav-group {
    width: 230px;
    height: 50px;
    background: #ececec;
    line-height: 50px;
    padding-left: 6px;
    margin: 3px 0;
    position: relative;
}

.nav-group .dot {
    left: 78px;
    top: 4px;
}

.dot {
    position: absolute;
    width: 12px;
    height: 12px;
    background: #f00;
    border-radius: 50%;
}

.nav-scroll {
    left: 236px;
    top: 217px;
    height: 263px;
}

/* Middle column */
.mid {
    width: 562px;
    margin-left: 9px;
    display: flex;
    flex-direction: column;
    gap: 9px;
}

.mid-top {
    height: 534px;
}

.mid-bottom {
    flex: 1;
    min-height: 0;
}

.tabs {
    height: 46px;
    flex-shrink: 0;
    background: #f0f0f0;
    display: flex;
    border-bottom: 2px solid #d8d8d8;
}

.tab {
    width: 130px;
    text-align: center;
    line-height: 44px;
    background: #dcdcdc;
    color: #888;
    border-right: 2px solid #ccc;
}

.tab.on {
    background: #f0f0f0;
    color: #222;
    font-weight: 500;
}

.list-tools {
    height: 54px;
    flex-shrink: 0;
    display: flex;
    align-items: center;
    gap: 27px;
    padding: 2px 0 0 4px;
    border-bottom: 2px solid #e4e4e4;
    white-space: nowrap;
}

.tool {
    display: flex;
    align-items: center;
    gap: 9px;
    height: 44px;
}

.tool.new {
    width: 124px;
    background: #d9eafc;
    border-radius: 6px;
    padding-left: 6px;
    margin-right: -13px;
}

.tool.new .caret {
    margin-left: 2px;
}

.t-i {
    width: 30px;
    height: 30px;
}

.tool-more {
    margin-left: auto;
    margin-right: 2px;
    width: 22px;
    height: 40px;
    border: 2px solid #eee;
    border-radius: 6px;
    font-size: 13px;
    line-height: 36px;
    text-align: center;
    color: #555;
    letter-spacing: -2px;
}

.list-search {
    height: 38px;
    flex-shrink: 0;
    display: flex;
    align-items: center;
    justify-content: space-between;
    padding: 0 14px 0 4px;
    color: #aaa;
    border-bottom: 2px solid #e4e4e4;
}

.tree {
    flex: 1;
    padding-top: 5px;
}

.tree-row {
    height: 48px;
    display: flex;
    align-items: center;
    gap: 6px;
}

.lv1 {
    padding-left: 26px;
}

.lv2 {
    padding-left: 66px;
}

.lv3 {
    padding-left: 120px;
}

.picked {
    width: 140px;
    height: 42px;
    background: #c3d9f1;
    border-radius: 6px;
    padding-left: 7px;
    line-height: 42px;
    white-space: pre;
    word-spacing: 4px;
}

/* Property table */
.props {
    flex: 1;
    min-height: 0;
    overflow: hidden;
    position: relative;
    border-bottom: 2px solid #dedede;
}

.prop-table {
    width: 530px;
    table-layout: fixed;
    border-collapse: collapse;
}

.c-no { width: 44px; }
.c-name { width: 201px; }
.c-val { width: 203px; }
.c-add { width: 82px; }

.prop-table th,
.prop-table td {
    border: 2px solid #dedede;
    white-space: nowrap;
    overflow: hidden;
    font-weight: 400;
}

.prop-table th {
    height: 40px;
    text-align: center;
    border-top: 0;
}

.prop-table th.hi {
    background: #7fb8f8;
    color: #fff;
    border: 2px solid #5b9de8;
}

.prop-table td {
    height: 42px;
}

.prop-table tr > :first-child {
    border-left: 0;
}

.no {
    background: #f0f0f0;
    text-align: center;
}

.name {
    color: #1a50e0;
    padding-left: 5px;
}

.val {
    padding-left: 7px;
    color: #333;
}

.add {
    text-align: center;
    line-height: 0;
}

.bar {
    font-size: 17px;
    vertical-align: 5px;
    margin: 0 1px;
}

.box {
    display: inline-block;
    width: 27px;
    height: 27px;
    border: 2px solid #a8a8a8;
    border-radius: 4px;
    background: #fff;
}

.prop-scroll {
    left: 541px;
    top: 136px;
    height: 102px;
}

.prop-foot {
    height: 59px;
    flex-shrink: 0;
    padding: 6px 0 0 10px;
}

.section-btn {
    width: 158px;
    height: 46px;
    background: #fff;
    border: 2px solid #dedede;
    border-radius: 8px;
    font: inherit;
    color: #333;
}

/* Splitter handles beside the drawing */
.handle {
    width: 9px;
    padding-top: 466px;
}

.handle span {
    display: block;
    width: 8px;
    height: 200px;
    margin-left: 1px;
    background: #6b7680;
}

/* Drawing */
.canvas {
    width: 1549px;
    background: #000;
    position: relative;
    overflow: hidden;
}

.cad {
    position: absolute;
    left: 0;
    top: 0;
}

.dim path {
    fill: none;
    stroke: #6aae54;
    stroke-width: 2;
}

.dim path.wide {
    stroke-width: 3;
}

.cad-text {
    font-family: "Lato", "Liberation Sans", sans-serif;
    font-weight: 100;
    stroke-width: 1;
}

.cad-text.white { fill: #fff; stroke: #fff; }
.cad-text.pink { fill: #ff20ff; stroke: #ff20ff; }
.cad-text.yellow { fill: #ffff20; stroke: #ffff20; }

.bubble circle {
    fill: none;
    stroke: #007000;
    stroke-width: 2;
}

.bubble circle.dim-ring {
    stroke: #0a4d0a;
}

.axis-mark {
    font-family: "Lato", "Liberation Sans", sans-serif;
    font-weight: 300;
    font-size: 34px;
    text-anchor: middle;
    fill: #f0f0f0;
}

.axis-mark.grey {
    fill: #c0c0c0;
}

.axis-mark.dimmed {
    fill: #8a8a8a;
}

.xy {
    font-family: "Liberation Sans", sans-serif;
    font-size: 24px;
    text-anchor: middle;
}

.xy.green { fill: #00d000; }
.xy.red { fill: #f00000; }

.view-tools {
    position: absolute;
    top: 1px;
    right: 1px;
    width: 64px;
    height: 490px;
    background: #fff;
    border-radius: 3px;
    display: flex;
    flex-direction: column;
    align-items: center;
    padding-top: 27px;
}

.v-i {
    width: 41px;
    height: 40px;
    flex-shrink: 0;
    margin-bottom: 18px;
}

.v-3d {
    font-size: 15px;
    font-weight: 700;
    fill: #1a73e8;
}

.v-caret {
    margin: -4px 0 12px;
    border-left-width: 6px;
    border-right-width: 6px;
    border-top-width: 8px;
    border-top-color: #555d6e;
}

.v-i + .v-sep {
    margin: -3px 0 14px;
}

.v-sep {
    width: 46px;
    height: 2px;
    background: #777;
    flex-shrink: 0;
}

.status-bar {
    position: absolute;
    left: 0;
    right: 0;
    bottom: 0;
    height: 54px;
    background: rgba(48, 48, 48, 0.88);
    display: flex;
    align-items: center;
    gap: 7px;
    padding-left: 517px;
    color: #fff;
}

.status-bar svg {
    margin-top: -6px;
}

.status-1,
.status-2 {
    position: absolute;
    left: 1519px;
    top: 6px;
    width: 20px;
    color: #777;
    font-size: 34px;
    line-height: 42px;
}

.status-1 {
    left: 362px;
    color: #5a5a5a;
}

/* Display settings */
.show {
    flex: 1;
    min-width: 0;
    border-right: 0;
    border-bottom: 0;
}

.show-tabs {
    height: 56px;
    flex-shrink: 0;
    display: flex;
    align-items: flex-end;
    gap: 6px;
    padding-left: 4px;
    border-bottom: 2px solid #c8ccd0;
}

.show-tab {
    width: 124px;
    height: 43px;
    background: #dedede;
    border-radius: 6px 6px 0 0;
    color: #555;
    text-align: center;
    line-height: 42px;
}

.show-tab.on {
    width: 118px;
    height: 48px;
    background: #fff;
    color: #1a73e8;
    border: 2px solid #c8ccd0;
    border-bottom: 0;
    line-height: 46px;
    position: relative;
    top: 2px;
}

.radios {
    height: 58px;
    flex-shrink: 0;
    display: flex;
    align-items: center;
    padding-left: 16px;
    gap: 15px;
    color: #111;
}

.radio {
    display: flex;
    align-items: center;
    gap: 15px;
    white-space: nowrap;
}

.dot-radio {
    width: 28px;
    height: 28px;
    border: 2px solid #aaa;
    border-radius: 50%;
    background: #fff;
    position: relative;
}

.dot-radio.on::after {
    content: "";
    position: absolute;
    left: 6px;
    top: 6px;
    width: 12px;
    height: 12px;
    border-radius: 50%;
    background: #1a73e8;
}

.floors {
    height: 870px;
    flex-shrink: 0;
    margin: 0 0 0 1px;
    border: 2px solid #c8ccd0;
    padding-top: 4px;
    overflow: hidden;
    position: relative;
    color: #888;
}

.floor {
    height: 48px;
    display: flex;
    align-items: center;
    padding-left: 88px;
    gap: 14px;
}

.top-floor {
    padding-left: 21px;
}

.top-floor .caret {
    margin-right: -2px;
}

.fbox {
    width: 26px;
    height: 27px;
    background: #f0f0f0;
    border: 2px solid #aaa;
    border-radius: 4px;
}

.fbox.part {
    box-shadow: inset 0 0 0 3px #fff;
    margin-right: 1px;
}

.floor-scroll {
    left: 451px;
    top: 31px;
    height: 580px;
}

.other {
    flex: 1;
    display: flex;
    align-items: center;
    gap: 7px;
    padding-left: 3px;
    white-space: nowrap;
}
```
